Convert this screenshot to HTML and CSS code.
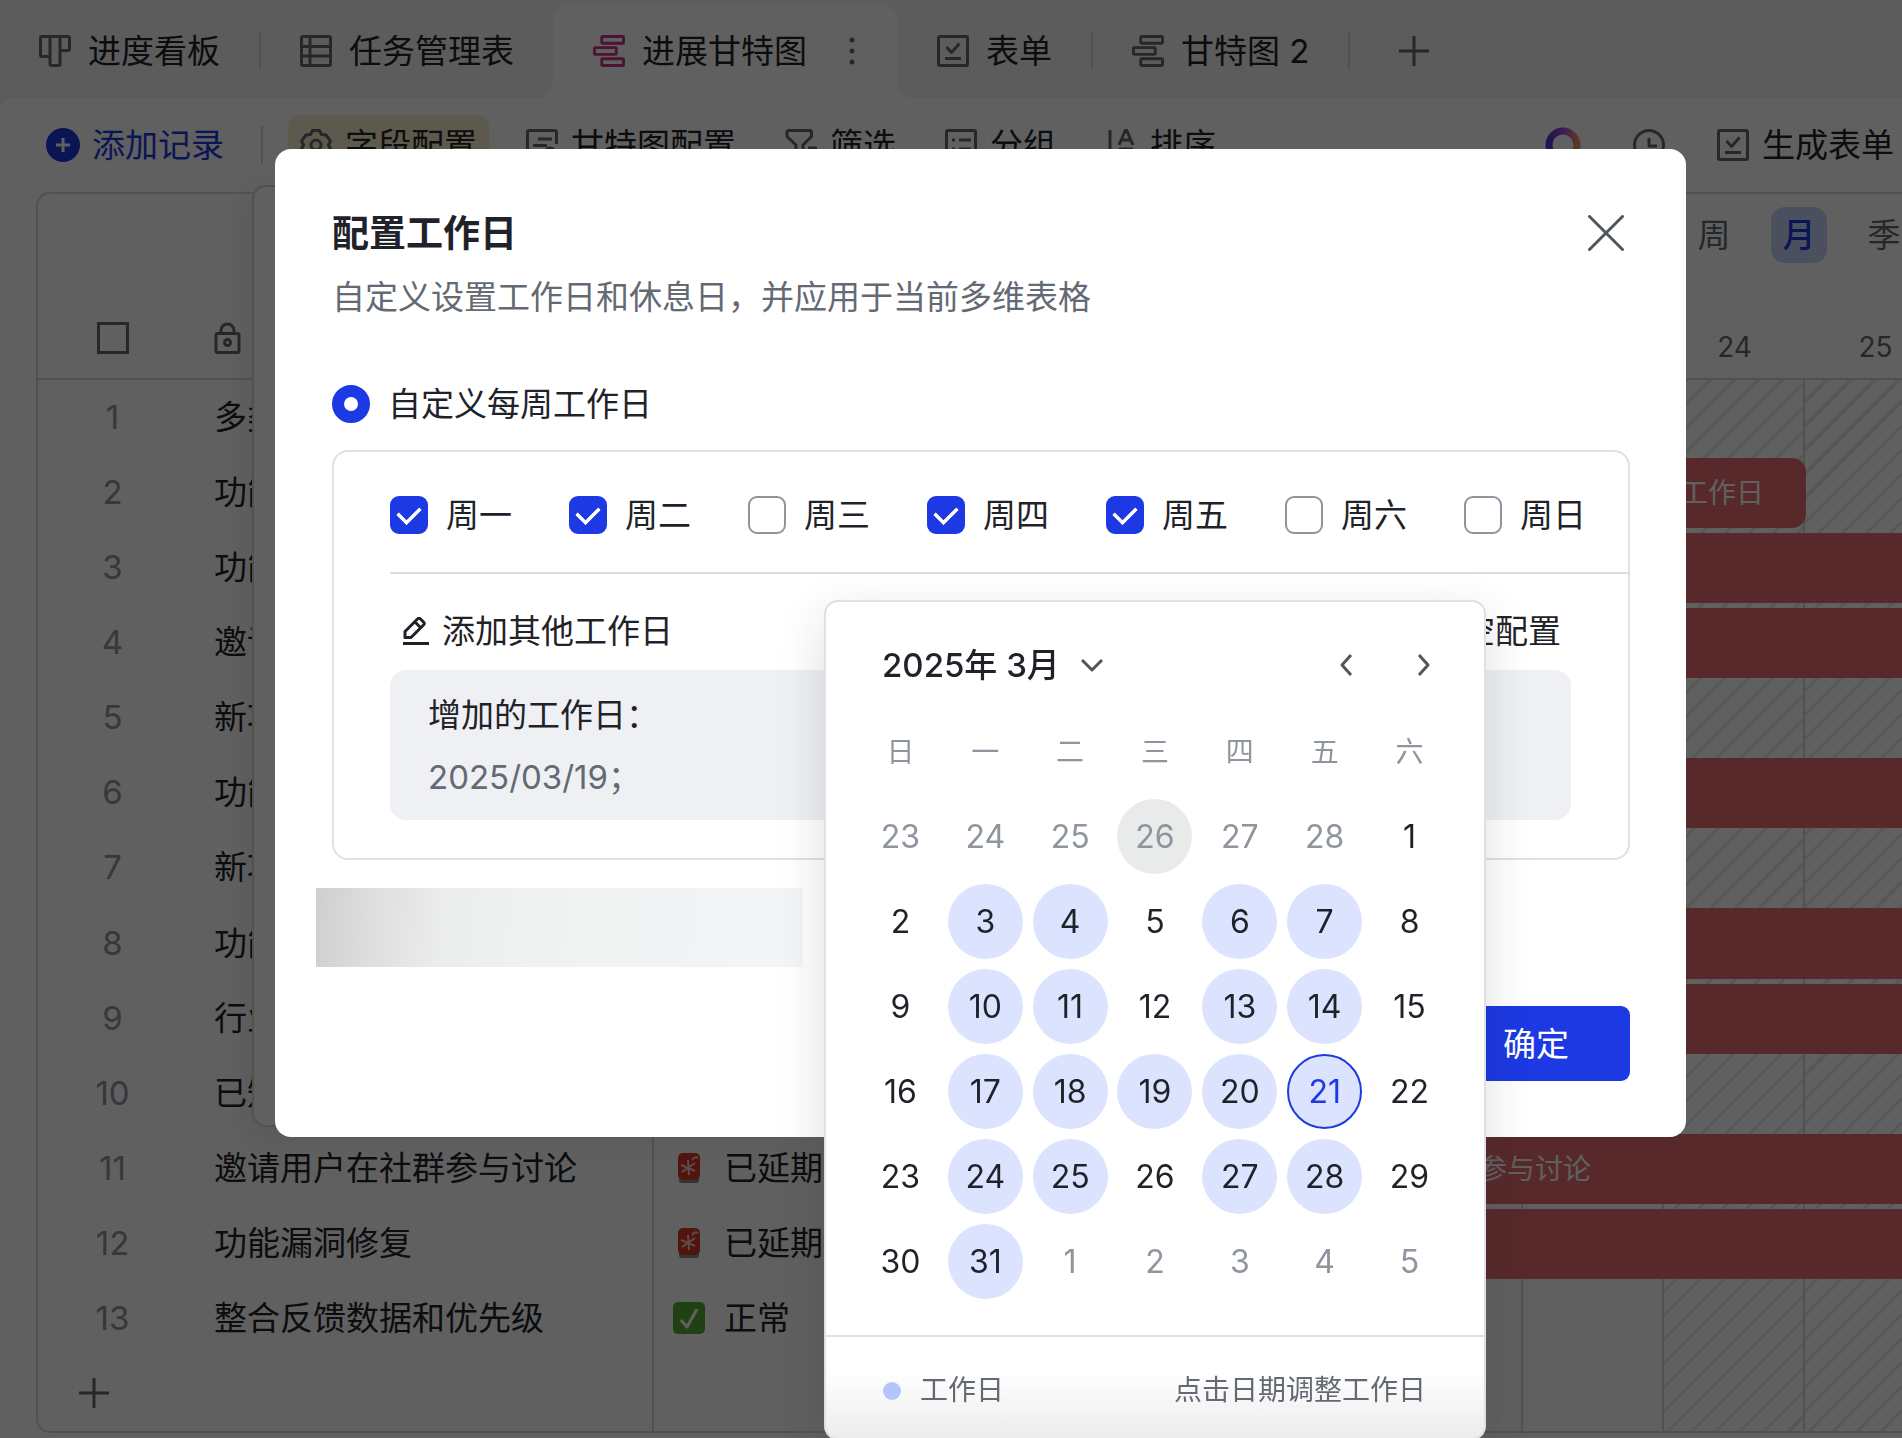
FILE: index.html
```html
<!DOCTYPE html>
<html lang="zh-CN">
<head>
  <meta charset="UTF-8" />
  <meta name="viewport" content="width=device-width, initial-scale=1.0"/>
  <title>配置工作日</title>
  <link rel="stylesheet" href="styles.css">
</head>
<body>
<svg class="sprite" aria-hidden="true">
  <symbol id="i-kanban" viewBox="0 0 32 32"><path d="M3 1.500h26q1.500 0 1.500 1.500v11q0 1.500-1.500 1.500h-8M11 21.500H3Q1.500 21.500 1.500 20V3Q1.500 1.500 3 1.500M11 1.500V29q0 1.500 1.500 1.500h7Q21 30.500 21 29V1.500"/></symbol>
  <symbol id="i-table" viewBox="0 0 32 32"><rect x="1.500" y="1.500" width="29" height="29" rx="1.500"/><path d="M10 2v28M2 11.500h28M2 21h28"/></symbol>
  <symbol id="i-gantt" viewBox="0 0 33 33"><rect x="9" y="1.500" width="22.500" height="7" rx="1"/><rect x="1.500" y="13" width="22.500" height="7" rx="1"/><rect x="9" y="24.500" width="22.500" height="7" rx="1"/></symbol>
  <symbol id="i-form" viewBox="0 0 32 32"><rect x="1.500" y="1.500" width="29" height="29" rx="1.500"/><path d="M9.500 12l5 5.500 8-9M8 23.500h16"/></symbol>
  <symbol id="i-plus" viewBox="0 0 32 32"><path d="M16 1v30M1 16h30"/></symbol>
  <symbol id="i-gear" viewBox="0 0 32 32"><path d="M12.500 1.500h7l2 4 4.500.5 4.500 6-2 4 2 4-4.500 6-4.500.5-2 4h-7l-2-4-4.500-.5-4.500-6 2-4-2-4 4.500-6 4.500-.5z"/><circle cx="16" cy="16" r="5"/></symbol>
  <symbol id="i-config" viewBox="0 0 32 32"><path d="M15 30.500H3Q1.500 30.500 1.500 29V3Q1.500 1.500 3 1.500h26q1.500 0 1.500 1.500v12M12 10h14M7 16.500h14M7 23h7"/><circle cx="24" cy="24" r="5"/></symbol>
  <symbol id="i-filter" viewBox="0 0 32 32"><path d="M2.500 1.500h22q2 0 2 2v4L18 16v14l-7-4V16L2 7.500v-4q0-2 2-2M23 19h9M23 25h9"/></symbol>
  <symbol id="i-group" viewBox="0 0 32 32"><rect x="1.500" y="1.500" width="29" height="29" rx="1.500"/><path d="M7 11h3M14 11h12M7 20h3M14 20h12"/></symbol>
  <symbol id="i-sort" viewBox="0 0 32 32"><path d="M5 1v29M14 16L20.500 1h1L28 16M16 11h10M14 20h13L14 31h13"/></symbol>
  <symbol id="i-clock" viewBox="0 0 32 32"><circle cx="16" cy="16" r="14.500"/><path d="M16 9v8h8"/></symbol>
  <symbol id="i-lock" viewBox="0 0 32 32"><rect x="2" y="11.500" width="23" height="19" rx="1.500"/><path d="M7 11V8.500a6.500 6.500 0 0 1 13 0V11"/><circle cx="13.500" cy="20.500" r="3"/></symbol>
  <symbol id="i-pen" viewBox="0 0 28 28"><path d="M1 26.500h26M3 14.500L15.500 2q1.500-1.500 3 0l3 3q1.500 1.500 0 3L9 20.500H3zM13 5l6 6"/></symbol>
  <symbol id="i-alarm" viewBox="0 0 32 32"><rect x="6" y="25" width="20" height="6" rx="3" fill="#8a8a8a" stroke="none"/><rect x="5" y="1" width="22" height="27" rx="5" fill="#d83a2c" stroke="none"/><path d="M15 8l1 15M8 13l14 6M22 11L9 20M19 8q3-4 6-2" stroke="#f7c9c0" stroke-width="2"/></symbol>
  <symbol id="i-ok" viewBox="0 0 32 32"><rect width="32" height="32" rx="5" fill="#56ac2e" stroke="none"/><path d="M8 18l6 7L24 7" stroke="#fff" stroke-width="3"/></symbol>
</svg>

<div class="app">
  <nav class="tabs">
    <button class="tab"><svg class="icon"><use href="#i-kanban"/></svg>进度看板</button>
    <span class="tab-sep"></span>
    <button class="tab"><svg class="icon"><use href="#i-table"/></svg>任务管理表</button>
    <button class="tab active"><svg class="icon"><use href="#i-gantt"/></svg>进展甘特图
      <svg class="dots" viewBox="0 0 6 28"><circle cx="3" cy="3" r="2.500"/><circle cx="3" cy="14" r="2.500"/><circle cx="3" cy="25" r="2.500"/></svg>
    </button>
    <button class="tab"><svg class="icon"><use href="#i-form"/></svg>表单</button>
    <span class="tab-sep"></span>
    <button class="tab"><svg class="icon"><use href="#i-gantt"/></svg>甘特图 2</button>
    <span class="tab-sep"></span>
    <button class="tab tab-add" aria-label="新增视图"><svg class="icon"><use href="#i-plus"/></svg></button>
  </nav>

  <main class="view">
    <div class="toolbar">
      <button class="tool add">
        <svg class="add-icon" viewBox="0 0 34 34"><circle cx="17" cy="17" r="17"/><path d="M17 10v14M10 17h14"/></svg>添加记录
      </button>
      <span class="tool-sep"></span>
      <button class="tool on"><svg class="icon"><use href="#i-gear"/></svg>字段配置</button>
      <button class="tool"><svg class="icon"><use href="#i-config"/></svg>甘特图配置</button>
      <button class="tool"><svg class="icon"><use href="#i-filter"/></svg>筛选</button>
      <button class="tool"><svg class="icon"><use href="#i-group"/></svg>分组</button>
      <button class="tool"><svg class="icon"><use href="#i-sort"/></svg>排序</button>
      <div class="tools-right">
        <button class="tool" aria-label="智能助手">
          <svg class="ring" viewBox="0 0 36 36">
            <defs><linearGradient id="ring"><stop offset="0" stop-color="#5a35d8"/><stop offset=".6" stop-color="#a855d8"/><stop offset="1" stop-color="#f0975a"/></linearGradient></defs>
            <circle cx="18" cy="18" r="14" fill="none" stroke="url(#ring)" stroke-width="7"/>
          </svg>
        </button>
        <button class="tool" aria-label="历史"><svg class="icon"><use href="#i-clock"/></svg></button>
        <button class="tool"><svg class="icon"><use href="#i-form"/></svg>生成表单</button>
      </div>
    </div>

    <div class="workspace">
      <section class="records">
        <table>
          <thead>
            <tr><th class="num"><input type="checkbox" class="pick" aria-label="全选"></th><th class="name"><svg class="icon"><use href="#i-lock"/></svg></th><th></th></tr>
          </thead>
          <tbody>
            <tr><td class="num">1</td><td class="name">多类型任务</td><td></td></tr>
            <tr><td class="num">2</td><td class="name">功能工作日</td><td></td></tr>
            <tr><td class="num">3</td><td class="name">功能优化</td><td></td></tr>
            <tr><td class="num">4</td><td class="name">邀请用户</td><td></td></tr>
            <tr><td class="num">5</td><td class="name">新功能</td><td></td></tr>
            <tr><td class="num">6</td><td class="name">功能测试</td><td></td></tr>
            <tr><td class="num">7</td><td class="name">新功能</td><td></td></tr>
            <tr><td class="num">8</td><td class="name">功能上线</td><td></td></tr>
            <tr><td class="num">9</td><td class="name">行业调研</td><td></td></tr>
            <tr><td class="num">10</td><td class="name">已知问题</td><td></td></tr>
            <tr><td class="num">11</td><td class="name">邀请用户在社群参与讨论</td><td><span class="status"><svg><use href="#i-alarm"/></svg>已延期</span></td></tr>
            <tr><td class="num">12</td><td class="name">功能漏洞修复</td><td><span class="status"><svg><use href="#i-alarm"/></svg>已延期</span></td></tr>
            <tr><td class="num">13</td><td class="name">整合反馈数据和优先级</td><td><span class="status"><svg><use href="#i-ok"/></svg>正常</span></td></tr>
            <tr><td colspan="2" class="add-row"><svg class="icon"><use href="#i-plus"/></svg></td><td></td></tr>
          </tbody>
        </table>
      </section>

      <section class="gantt">
        <div class="scale">
          <button>周</button><button class="on">月</button><button>季</button>
        </div>
        <div class="dates"><span>19</span><span>20</span><span>21</span><span>22</span><span>23</span><span>24</span><span>25</span></div>
        <div class="chart">
          <div class="days"><i></i><i></i><i></i><i></i><i></i><i class="off"></i><i class="off"></i></div>
          <div class="lanes">
            <div></div>
            <div><span class="bar ends">工作日</span></div>
            <div><span class="bar"></span></div>
            <div><span class="bar"></span></div>
            <div></div>
            <div><span class="bar"></span></div>
            <div></div>
            <div><span class="bar"></span></div>
            <div><span class="bar"></span></div>
            <div></div>
            <div><span class="bar">邀请用户在社群参与讨论</span></div>
            <div><span class="bar"></span></div>
            <div></div>
            <div></div>
          </div>
        </div>
      </section>
    </div>
  </main>
  <aside class="drawer"></aside>
</div>

<div class="mask">
  <div class="dialog" role="dialog" aria-labelledby="dlg-title">
    <button class="close" aria-label="关闭"><svg viewBox="0 0 36 36"><path d="M1.500 1.500l33 33M34.500 1.500l-33 33"/></svg></button>
    <h1 id="dlg-title">配置工作日</h1>
    <p class="desc">自定义设置工作日和休息日，并应用于当前多维表格</p>

    <label class="mode"><input type="radio" name="mode" checked>自定义每周工作日</label>

    <div class="box">
      <div class="week">
        <label><input type="checkbox" checked>周一</label>
        <label><input type="checkbox" checked>周二</label>
        <label><input type="checkbox">周三</label>
        <label><input type="checkbox" checked>周四</label>
        <label><input type="checkbox" checked>周五</label>
        <label><input type="checkbox">周六</label>
        <label><input type="checkbox">周日</label>
      </div>
      <div class="extra-head">
        <button><svg class="pen"><use href="#i-pen"/></svg>添加其他工作日</button>
        <button>清空配置</button>
      </div>
      <div class="extra">
        <div>增加的工作日：</div>
        <div class="extra-dates">2025/03/19；</div>
      </div>
    </div>

    <div class="blurred"></div>
    <div class="footer"><button class="primary">确定</button></div>

    <div class="picker">
      <div class="picker-head">
        <button class="month">2025年 3月<svg viewBox="0 0 24 24"><path d="M2 7l10 10L22 7"/></svg></button>
        <button class="arrow" aria-label="上个月"><svg viewBox="0 0 24 24"><path d="M17 2L8 12l9 10"/></svg></button>
        <button class="arrow" aria-label="下个月"><svg viewBox="0 0 24 24"><path d="M8 2l9 10-9 10"/></svg></button>
      </div>
      <table class="cal">
        <thead><tr><th>日</th><th>一</th><th>二</th><th>三</th><th>四</th><th>五</th><th>六</th></tr></thead>
        <tbody>
          <tr><td><button class="out">23</button></td><td><button class="out">24</button></td><td><button class="out">25</button></td><td><button class="out hover">26</button></td><td><button class="out">27</button></td><td><button class="out">28</button></td><td><button>1</button></td></tr>
          <tr><td><button>2</button></td><td><button class="work">3</button></td><td><button class="work">4</button></td><td><button>5</button></td><td><button class="work">6</button></td><td><button class="work">7</button></td><td><button>8</button></td></tr>
          <tr><td><button>9</button></td><td><button class="work">10</button></td><td><button class="work">11</button></td><td><button>12</button></td><td><button class="work">13</button></td><td><button class="work">14</button></td><td><button>15</button></td></tr>
          <tr><td><button>16</button></td><td><button class="work">17</button></td><td><button class="work">18</button></td><td><button class="work">19</button></td><td><button class="work">20</button></td><td><button class="work today">21</button></td><td><button>22</button></td></tr>
          <tr><td><button>23</button></td><td><button class="work">24</button></td><td><button class="work">25</button></td><td><button>26</button></td><td><button class="work">27</button></td><td><button class="work">28</button></td><td><button>29</button></td></tr>
          <tr><td><button>30</button></td><td><button class="work">31</button></td><td><button class="out">1</button></td><td><button class="out">2</button></td><td><button class="out">3</button></td><td><button class="out">4</button></td><td><button class="out">5</button></td></tr>
        </tbody>
      </table>
      <div class="legend"><span class="legend-key">工作日</span><span>点击日期调整工作日</span></div>
    </div>
  </div>
</div>
</body>
</html>
```
FILE: styles.css
```css
* {
  box-sizing: border-box;
}
body {
  margin: 0;
  font-family: Inter, "Noto Sans CJK SC", sans-serif;
  font-size: 33px;
  line-height: 44px;
  color: #1f2329;
  background-color: #f3f3f3;
}
button {
  border: none;
  padding: 0;
  background: none;
  font: inherit;
  color: inherit;
  cursor: pointer;
}
svg {
  fill: none;
  stroke: currentColor;
  stroke-width: 3;
  stroke-linejoin: round;
}
.sprite {
  position: absolute;
  width: 0;
  height: 0;
}
.icon {
  width: 32px;
  height: 32px;
  flex: none;
  color: #646a73;
}
.app {
  position: relative;
  display: flex;
  flex-direction: column;
  height: 100vh;
  overflow: hidden;
}

/* view tabs */
.tabs {
  display: flex;
  align-items: center;
  height: 98px;
  flex: none;
}
.tab {
  display: flex;
  align-items: center;
  gap: 17px;
  height: 94px;
  padding: 0 39px;
  margin-top: 4px;
  white-space: nowrap;
}
.tab-sep {
  width: 2px;
  height: 38px;
  margin-top: 4px;
  background-color: #d4d7da;
}
.tab + .tab {
  padding-left: 40px;
}
.tab.active {
  position: relative;
  padding-right: 42px;
  background-color: #fff;
  border-radius: 16px 16px 0 0;
}
.tab.active .icon {
  color: #c8358c;
}
.tab.active::before,
.tab.active::after {
  content: "";
  position: absolute;
  bottom: 0;
  width: 16px;
  height: 16px;
}
.tab.active::before {
  right: 100%;
  background: radial-gradient(circle at 0 0, transparent 16px, #fff 16px);
}
.tab.active::after {
  left: 100%;
  background: radial-gradient(circle at 100% 0, transparent 16px, #fff 16px);
}
.tab .dots {
  width: 6px;
  height: 28px;
  margin-left: 25px;
  fill: #646a73;
  stroke: none;
}
.tab-add {
  padding: 0 48px;
}

/* toolbar */
.view {
  flex: 1;
  display: flex;
  flex-direction: column;
  min-height: 0;
  padding-bottom: 5px;
  background-color: #fff;
  border-radius: 14px 0 0 0;
}
.toolbar {
  display: flex;
  align-items: center;
  gap: 25px;
  height: 94px;
  flex: none;
  padding: 0 0 0 34px;
}
.tool {
  display: flex;
  align-items: center;
  gap: 13px;
  height: 60px;
  padding: 0 12px;
  border-radius: 12px;
  white-space: nowrap;
}
.tool.add {
  gap: 12px;
  color: #1c39e3;
}
.add-icon {
  width: 34px;
  height: 34px;
  fill: #1c39e3;
  stroke: #fff;
}
.add-icon circle {
  stroke: none;
}
.tool.on {
  background-color: #f8ebcb;
}
.tool-sep {
  width: 2px;
  height: 38px;
  background-color: #d4d7da;
}
.ring {
  width: 36px;
  height: 36px;
}
.tools-right {
  display: flex;
  gap: 28px;
  margin: 0 -4px 0 auto;
}

/* records */
.workspace {
  flex: 1;
  display: flex;
  min-height: 0;
}
.records {
  width: 923px;
  flex: none;
  margin-left: 36px;
  border: 2px solid #d4dad9;
  border-right: none;
  border-radius: 14px 0 0 14px;
}
.records table {
  width: 100%;
  height: 100%;
  table-layout: fixed;
  border-collapse: collapse;
}
.records th {
  height: 185px;
  padding: 0;
  border-bottom: 2px solid #d4dad9;
  text-align: left;
  vertical-align: bottom;
}
.records td {
  height: 75px;
  padding: 0;
}
.records .num {
  width: 149px;
  text-align: center;
  color: #8f959e;
}
.records .name {
  width: 466px;
  padding-left: 27px;
  white-space: nowrap;
}
.records tr > :nth-child(2).name,
.add-row {
  border-right: 2px solid #d4dad9;
}
.records th .icon {
  display: block;
  margin-bottom: 24px;
}
.pick {
  appearance: none;
  display: block;
  width: 32px;
  height: 32px;
  margin: 0 auto 24px;
  border: 3px solid #646a73;
}
.records .add-row {
  padding-left: 40px;
}
.add-row .icon {
  display: block;
}
.status {
  display: flex;
  align-items: center;
  gap: 19px;
  padding-left: 19px;
}
.status svg {
  width: 32px;
  height: 32px;
}

/* gantt */
.gantt {
  flex: 1;
  display: flex;
  flex-direction: column;
  min-width: 0;
  overflow: hidden;
  border-top: 2px solid #d4dad9;
  border-bottom: 2px solid #d4dad9;
}
.scale {
  display: flex;
  justify-content: flex-end;
  gap: 29px;
  height: 122px;
  padding-top: 13px;
  margin-right: -10px;
  color: #646a73;
}
.scale button {
  width: 56px;
  height: 56px;
  border-radius: 14px;
}
.scale .on {
  background-color: #c8d5fa;
  color: #1c39e3;
  font-weight: 500;
}
.dates,
.days {
  display: grid;
  grid-template-columns: repeat(7, 141px);
}
.dates {
  height: 64px;
  flex: none;
  align-items: center;
  border-bottom: 2px solid #d4dad9;
  font-size: 28px;
  text-align: center;
  color: #646a73;
}
.chart {
  flex: 1;
  display: grid;
  grid-template-columns: 1fr;
}
.days,
.lanes {
  grid-area: 1 / 1;
  min-width: 0;
}
.days i {
  border-right: 2px solid #d4dad9;
}
.days .off {
  background: repeating-linear-gradient(135deg, transparent 0, transparent 14px, #e6e8e8 14px, #e6e8e8 17px);
}
.lanes {
  display: grid;
  grid-template-rows: repeat(14, 1fr);
}
.lanes div {
  padding: 3px 0 2px;
}
.bar {
  display: block;
  height: 100%;
  padding-left: 324px;
  background-color: #ea6d6f;
  font-size: 28px;
  line-height: 70px;
  color: #fff;
}
.bar.ends {
  width: 847px;
  padding-right: 42px;
  border-radius: 14px;
  text-align: right;
}
.drawer {
  position: absolute;
  top: 185px;
  left: 252px;
  width: 600px;
  height: 942px;
  background-color: #fff;
  border: 2px solid #d4dad9;
  border-radius: 14px;
  box-shadow: 0 8px 32px rgba(31, 35, 41, 0.12);
}

/* dialog */
.mask {
  position: fixed;
  inset: 0;
  overflow: hidden;
  background-color: rgba(0, 0, 0, 0.625);
}
.dialog {
  position: absolute;
  top: 149px;
  left: 275px;
  right: 216px;
  padding: 58px 56px 56px 57px;
  background-color: #fff;
  border-radius: 16px;
}
.dialog h1 {
  margin: 0;
  font-size: 37px;
  line-height: 54px;
  font-weight: 600;
}
.desc {
  margin: 14px 0 0;
  color: #646a73;
}
.close {
  position: absolute;
  top: 66px;
  right: 62px;
  color: #51565d;
}
.close svg {
  display: block;
  width: 36px;
  height: 36px;
  stroke-linecap: round;
}
.mode {
  display: flex;
  align-items: center;
  gap: 18px;
  margin-top: 63px;
}
.mode input {
  appearance: none;
  width: 38px;
  height: 38px;
  margin: 0;
  border: 12px solid #1c39e3;
  border-radius: 50%;
}
.box {
  margin-top: 24px;
  padding: 0 0 38px 56px;
  border: 2px solid #dee0e3;
  border-radius: 16px;
}
.week {
  display: flex;
  gap: 57px;
  padding: 41px 0 35px;
  border-bottom: 2px solid #dcdddf;
}
.week label {
  display: flex;
  align-items: center;
  gap: 18px;
  white-space: nowrap;
}
.week input {
  appearance: none;
  display: grid;
  place-items: center;
  width: 38px;
  height: 38px;
  margin: 0;
  border: 2px solid #8f959e;
  border-radius: 9px;
}
.week input:checked {
  background-color: #1c39e3;
  border-color: #1c39e3;
}
.week input:checked::after {
  content: "";
  width: 18px;
  height: 11px;
  margin-top: -5px;
  border: solid #fff;
  border-width: 0 0 4px 4px;
  border-radius: 1px;
  transform: rotate(-45deg);
}
.extra-head {
  display: flex;
  justify-content: space-between;
  margin: 35px 57px 17px 0;
  padding: 0 10px 0 12px;
}
.extra-head button {
  display: flex;
  align-items: center;
  gap: 12px;
}
.pen {
  width: 28px;
  height: 28px;
}
.extra {
  margin-right: 57px;
  padding: 14px 38px 12px;
  line-height: 62px;
  background-color: #eff0f4;
  border-radius: 16px;
}
.extra-dates {
  color: #646a73;
}
.blurred {
  width: 487px;
  height: 79px;
  margin: 28px 0 39px -16px;
  background: linear-gradient(95deg, #cfcfcf 0%, #dedede 12%, #ebecec 26%, #f0f1f1 45%, #f4f5f7 100%);
}
.footer {
  display: flex;
  justify-content: flex-end;
}
.primary {
  width: 188px;
  height: 75px;
  background-color: #1c39e3;
  border-radius: 9px;
  color: #fff;
}

/* date picker */
.picker {
  position: absolute;
  top: 451px;
  left: 549px;
  right: 200px;
  background: linear-gradient(#fff 92%, #ececec);
  border: 2px solid #dee0e3;
  border-radius: 14px;
  box-shadow: 0 16px 48px rgba(31, 35, 41, 0.15);
}
.picker-head {
  display: flex;
  align-items: center;
  gap: 53px;
  padding: 36px 49px 17px 56px;
}
.picker-head svg {
  display: block;
  width: 24px;
  height: 24px;
  color: #51565d;
}
.month {
  display: flex;
  align-items: center;
  gap: 20px;
  margin-right: auto;
  line-height: 54px;
  font-weight: 500;
}
.cal {
  width: 100%;
  padding: 0 32px;
  table-layout: fixed;
  border-spacing: 0;
}
.cal th,
.cal td {
  height: 85px;
  padding: 0;
  text-align: center;
}
.cal th {
  font-size: 28px;
  font-weight: 400;
  color: #8f959e;
}
.cal button {
  width: 75px;
  height: 75px;
  border: 2px solid transparent;
  border-radius: 50%;
  font-size: 32px;
  line-height: 44px;
  vertical-align: middle;
}
.cal .out {
  color: #8f959e;
}
.cal .hover {
  background-color: #e8ebea;
}
.cal .work {
  background-color: #dbe3fe;
}
.cal .today {
  border-color: #1c39e3;
  color: #1c39e3;
}
.legend {
  display: flex;
  justify-content: space-between;
  margin-top: 31px;
  padding: 31px 58px 26px 57px;
  border-top: 2px solid #dee0e3;
  font-size: 28px;
  color: #646a73;
}
.legend-key::before {
  content: "";
  display: inline-block;
  width: 18px;
  height: 18px;
  margin-right: 19px;
  background-color: #b5c4fb;
  border-radius: 50%;
}
```
